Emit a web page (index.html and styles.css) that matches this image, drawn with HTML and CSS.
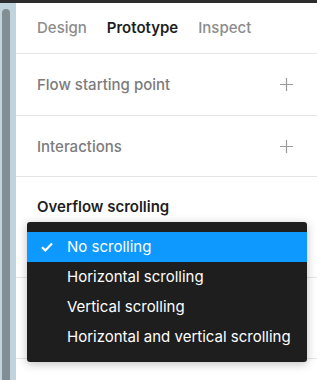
FILE: index.html
```html
<!DOCTYPE html>
<html>
<head>
    <title>Prototype panel</title>
    <link rel="stylesheet" href="styles.css">
</head>
<body>
    <div class="topbar"></div>
    <div class="layout">
        <div class="rail">
            <div class="thumb"></div>
        </div>
        <div class="panel">
            <div class="tabs">
                <span class="tab">Design</span>
                <span class="tab active">Prototype</span>
                <span class="tab">Inspect</span>
            </div>

            <div class="section first">
                <span class="title">Flow starting point</span>
                <svg class="plus" width="13" height="13" viewBox="0 0 13 13"><path d="M6.5 0v13M0 6.5h13" stroke="#9a9a9a" stroke-width="1.2"/></svg>
            </div>

            <div class="section">
                <span class="title">Interactions</span>
                <svg class="plus" width="13" height="13" viewBox="0 0 13 13"><path d="M6.5 0v13M0 6.5h13" stroke="#9a9a9a" stroke-width="1.2"/></svg>
            </div>

            <div class="section overflow">
                <span class="title dark">Overflow scrolling</span>
            </div>

            <div class="section empty"></div>

            <!-- Overflow dropdown -->
            <div class="menu">
                <div class="option selected">
                    <svg class="check" width="12" height="10" viewBox="0 0 12 10"><path d="M1 5.2l3.3 3.2L11 1.5" fill="none" stroke="#fff" stroke-width="2.2"/></svg>
                    No scrolling
                </div>
                <div class="option">Horizontal scrolling</div>
                <div class="option">Vertical scrolling</div>
                <div class="option">Horizontal and vertical scrolling</div>
            </div>
        </div>
    </div>
</body>
</html>
```

FILE: styles.css
```css
body {
    font-family: Inter, "Noto Sans", sans-serif;
    margin: 0;
    padding: 0;
    background-color: #ffffff;
    width: 317px;
    height: 380px;
    overflow: hidden;
}
.topbar {
    height: 3px;
    background-color: #2c2c2c;
}
.layout {
    display: flex;
    height: 377px;
}
.rail {
    width: 16px;
    background-color: #c1d3dc;
    padding: 6px 0 0 2px;
    box-sizing: border-box;
}
.thumb {
    width: 8px;
    height: 100%;
    background-color: #838e92;
    border-radius: 4px 4px 0 0;
}
.panel {
    flex: 1;
    position: relative;
}
.tabs {
    display: flex;
    gap: 20px;
    height: 51px;
    align-items: center;
    padding-left: 21px;
    padding-bottom: 1px;
    box-sizing: border-box;
    border-bottom: 1px solid #e5e5e5;
    font-size: 15px;
}
.tab {
    color: #8c8c8c;
    font-weight: 500;
}
.tab.active {
    color: #1e1e1e;
    font-weight: 600;
}
.section {
    display: flex;
    justify-content: space-between;
    align-items: center;
    height: 61px;
    padding: 0 24px 0 21px;
    box-sizing: border-box;
    border-bottom: 1px solid #e5e5e5;
}
.section.first {
    height: 62px;
}
.title {
    font-size: 15px;
    font-weight: 500;
    color: #7c7c7c;
}
.title.dark {
    color: #1e1e1e;
    font-weight: 600;
}
.overflow {
    height: 101px;
    align-items: flex-start;
    padding-top: 20px;
}
.empty {
    height: 81px;
}
.menu {
    position: absolute;
    left: 11px;
    top: 219px;
    width: 280px;
    padding: 10px 0;
    background-color: #1e1e1e;
    border-radius: 3px;
    box-shadow: 0 2px 10px rgba(0,0,0,0.25);
}
.option {
    position: relative;
    height: 30px;
    line-height: 30px;
    padding-left: 40px;
    color: #ffffff;
    font-size: 15px;
}
.option.selected {
    background-color: #0d99ff;
}
.check {
    position: absolute;
    left: 14px;
    top: 10px;
}
```
